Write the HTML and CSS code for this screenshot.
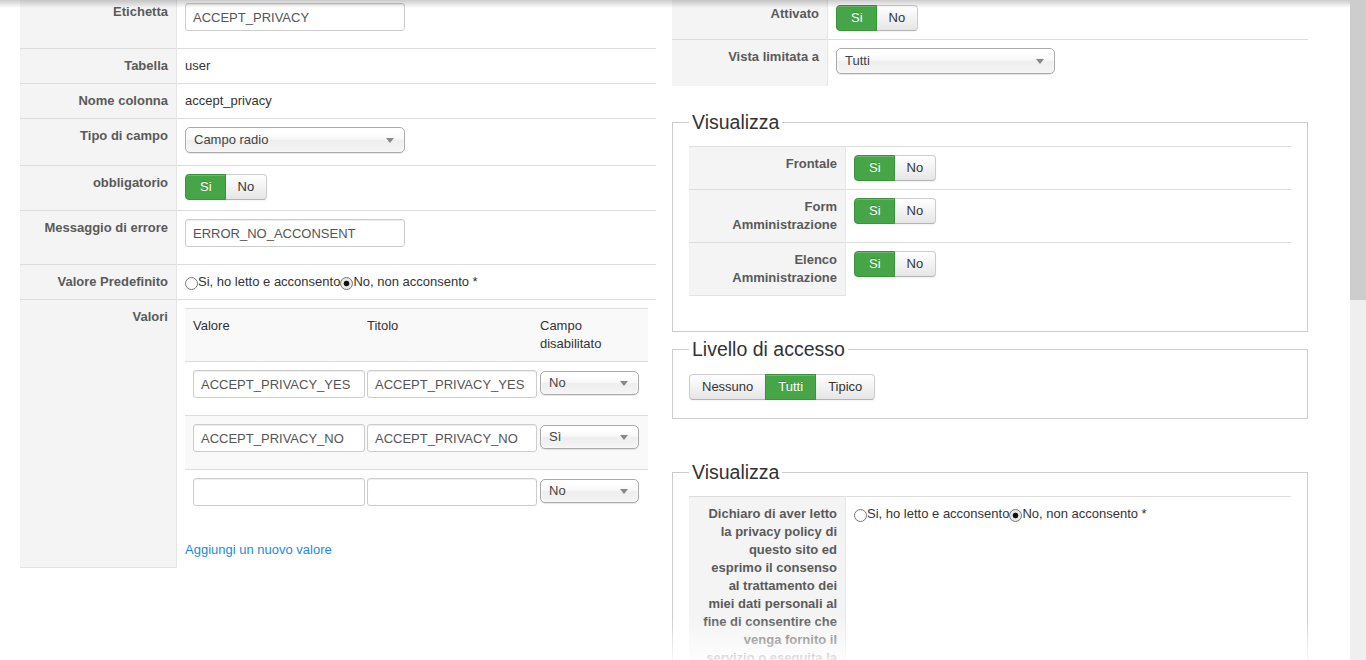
FILE: index.html
```html
<!DOCTYPE html>
<html>
<head>
    <meta charset="UTF-8">
    <title>Campo utente - accept_privacy</title>
    <link rel="stylesheet" href="styles.css">
</head>
<body>
<div class="screen">
    <div class="viewport">
        <div class="page">
            <!-- colonna sinistra: dettagli del campo -->
            <div class="col col-left">
                <table class="form">
                    <tr>
                        <td class="key">Etichetta</td>
                        <td><input type="text" class="text" value="ACCEPT_PRIVACY"></td>
                    </tr>
                    <tr>
                        <td class="key">Tabella</td>
                        <td>user</td>
                    </tr>
                    <tr>
                        <td class="key">Nome colonna</td>
                        <td>accept_privacy</td>
                    </tr>
                    <tr>
                        <td class="key">Tipo di campo</td>
                        <td>
                            <div class="select"><span>Campo radio</span><svg width="8" height="5" viewBox="0 0 8 5"><path d="M0 0H8L4 5Z" fill="#888"/></svg></div>
                        </td>
                    </tr>
                    <tr>
                        <td class="key">obbligatorio</td>
                        <td>
                            <div class="btn-group"><span class="btn on">Si</span><span class="btn">No</span></div>
                        </td>
                    </tr>
                    <tr>
                        <td class="key">Messaggio di errore</td>
                        <td><input type="text" class="text" value="ERROR_NO_ACCONSENT"></td>
                    </tr>
                    <tr>
                        <td class="key">Valore Predefinito</td>
                        <td>
                            <span class="radio"></span>Si, ho letto e acconsento<span class="radio checked"></span>No, non acconsento *
                        </td>
                    </tr>
                    <tr class="last">
                        <td class="key">Valori</td>
                        <td>
                            <table class="values">
                                <tr class="stripe">
                                    <td class="c1">Valore</td>
                                    <td class="c2">Titolo</td>
                                    <td class="c3">Campo disabilitato</td>
                                </tr>
                                <tr>
                                    <td class="c1"><input type="text" class="text w1" value="ACCEPT_PRIVACY_YES"></td>
                                    <td class="c2"><input type="text" class="text w2" value="ACCEPT_PRIVACY_YES"></td>
                                    <td class="c3"><div class="select small"><span>No</span><svg width="8" height="5" viewBox="0 0 8 5"><path d="M0 0H8L4 5Z" fill="#888"/></svg></div></td>
                                </tr>
                                <tr class="stripe">
                                    <td class="c1"><input type="text" class="text w1" value="ACCEPT_PRIVACY_NO"></td>
                                    <td class="c2"><input type="text" class="text w2" value="ACCEPT_PRIVACY_NO"></td>
                                    <td class="c3"><div class="select small"><span>Sì</span><svg width="8" height="5" viewBox="0 0 8 5"><path d="M0 0H8L4 5Z" fill="#888"/></svg></div></td>
                                </tr>
                                <tr>
                                    <td class="c1"><input type="text" class="text w1" value=""></td>
                                    <td class="c2"><input type="text" class="text w2" value=""></td>
                                    <td class="c3"><div class="select small"><span>No</span><svg width="8" height="5" viewBox="0 0 8 5"><path d="M0 0H8L4 5Z" fill="#888"/></svg></div></td>
                                </tr>
                            </table>
                            <a href="#" class="add-link">Aggiungi un nuovo valore</a>
                        </td>
                    </tr>
                </table>
            </div>

            <!-- colonna destra: pubblicazione e visualizzazione -->
            <div class="col col-right">
                <table class="form">
                    <tr>
                        <td class="key">Attivato</td>
                        <td>
                            <div class="btn-group flat"><span class="btn on">Si</span><span class="btn">No</span></div>
                        </td>
                    </tr>
                    <tr>
                        <td class="key">Vista limitata a</td>
                        <td>
                            <div class="select"><span>Tutti</span><svg width="8" height="5" viewBox="0 0 8 5"><path d="M0 0H8L4 5Z" fill="#888"/></svg></div>
                        </td>
                    </tr>
                </table>

                <fieldset class="box first">
                    <legend>Visualizza</legend>
                    <table class="form inner">
                        <tr>
                            <td class="key">Frontale</td>
                            <td><div class="btn-group flat"><span class="btn on">Si</span><span class="btn">No</span></div></td>
                        </tr>
                        <tr>
                            <td class="key">Form Amministrazione</td>
                            <td><div class="btn-group flat"><span class="btn on">Si</span><span class="btn">No</span></div></td>
                        </tr>
                        <tr class="last">
                            <td class="key">Elenco Amministrazione</td>
                            <td><div class="btn-group flat"><span class="btn on">Si</span><span class="btn">No</span></div></td>
                        </tr>
                    </table>
                </fieldset>

                <fieldset class="box access">
                    <legend>Livello di accesso</legend>
                    <div class="btn-group flat"><span class="btn">Nessuno</span><span class="btn on">Tutti</span><span class="btn">Tipico</span></div>
                </fieldset>

                <fieldset class="box preview">
                    <legend>Visualizza</legend>
                    <table class="form inner">
                        <tr>
                            <td class="key">Dichiaro di aver letto la privacy policy di questo sito ed esprimo il consenso al trattamento dei miei dati personali al fine di consentire che venga fornito il servizio o eseguita la prestazione richiesta</td>
                            <td>
                                <span class="radio"></span>Si, ho letto e acconsento<span class="radio checked"></span>No, non acconsento *
                            </td>
                        </tr>
                    </table>
                </fieldset>
            </div>
        </div>
        <div class="top-shade"></div>
        <div class="bottom-fade"></div>
    </div>
    <div class="scrollbar"><div class="thumb"></div></div>
</div>
</body>
</html>
```

FILE: styles.css
```css
html,
body {
    margin: 0;
    padding: 0;
    background: #fff;
}

body {
    font-family: 'Liberation Sans', Arial, sans-serif;
    font-size: 13px;
    line-height: 18px;
    color: #333;
}

.screen {
    display: flex;
    width: 1366px;
    height: 660px;
    overflow: hidden;
}

.viewport {
    position: relative;
    width: 1350px;
    height: 660px;
    overflow: hidden;
}

.scrollbar {
    width: 16px;
    height: 660px;
    background: #efefef;
}

.scrollbar .thumb {
    height: 300px;
    background: #cdcdcd;
}

.page {
    display: flex;
    gap: 16px;
    padding-left: 20px;
    align-items: flex-start;
}

.col {
    width: 636px;
}

.col-left {
    margin-top: -6px;
}

.col-right {
    margin-top: -4px;
}

/* tabelle modulo */
.form {
    width: 100%;
    border-collapse: collapse;
}

.form > tbody > tr > td {
    padding: 8px;
    border-top: 1px solid #ddd;
    vertical-align: top;
    text-align: left;
}

.form > tbody > tr > td.key {
    width: 140px;
    background: #f4f4f4;
    border-right: 1px solid #e6e6e6;
    text-align: right;
    font-weight: bold;
    color: #5a5a5a;
}

.col-right > .form > tbody > tr > td.key {
    width: 139px;
}

.form > tbody > tr.last > td.key {
    border-bottom: 1px solid #e2e2e2;
}

.inner > tbody > tr > td.key {
    padding-left: 11px;
    width: 137px;
}

/* campi */
.text {
    display: block;
    box-sizing: border-box;
    width: 220px;
    height: 28px;
    margin: 0 0 9px;
    padding: 4px 7px;
    font-family: inherit;
    font-size: 13px;
    line-height: 18px;
    color: #555;
    border: 1px solid #ccc;
    border-radius: 3px;
    box-shadow: inset 0 1px 1px rgba(0, 0, 0, 0.075);
    background: #fff;
}

.text.w1 {
    width: 172px;
}

.text.w2 {
    width: 170px;
}

.select {
    box-sizing: border-box;
    width: 220px;
    height: 26px;
    margin-bottom: 4px;
    padding: 0 8px;
    display: flex;
    align-items: center;
    justify-content: space-between;
    border: 1px solid #aaa;
    border-radius: 5px;
    color: #444;
    background: linear-gradient(#fff 20%, #f6f6f6 50%, #eee 52%, #f4f4f4 100%);
    box-shadow: inset 0 0 3px #fff, 0 1px 1px rgba(0, 0, 0, 0.1);
}

.select svg {
    margin-right: 2px;
}

.col-right .select {
    width: 219px;
}

.select.small {
    width: 99px;
    height: 24px;
    margin-top: 1px;
}

/* pulsanti */
.btn-group {
    display: inline-flex;
    margin-bottom: 2px;
}

.btn-group.flat {
    margin-bottom: 0;
}

.btn {
    display: inline-block;
    padding: 4px 12px;
    line-height: 16px;
    font-size: 13px;
    color: #333;
    border: 1px solid #ccc;
    border-bottom-color: #b3b3b3;
    background: linear-gradient(#fff, #e6e6e6);
    box-shadow: inset 0 1px 0 rgba(255, 255, 255, 0.2), 0 1px 2px rgba(0, 0, 0, 0.05);
}

.btn + .btn {
    margin-left: -1px;
}

.btn:first-child {
    border-radius: 4px 0 0 4px;
}

.btn:last-child {
    border-radius: 0 4px 4px 0;
}

.btn.on {
    position: relative;
    color: #fff;
    background: #46a546;
    border-color: #3d913d;
    text-shadow: 0 -1px 0 rgba(0, 0, 0, 0.2);
}

.btn.on:first-child {
    padding: 4px 13px 4px 14px;
}

/* radio */
.radio {
    display: inline-block;
    box-sizing: border-box;
    width: 13px;
    height: 13px;
    vertical-align: -4px;
    border: 1px solid #777;
    border-radius: 50%;
    background: #fff;
}

.radio.checked {
    background: radial-gradient(circle, #111 0, #111 2.5px, #e8e8e8 3.2px, #e8e8e8 100%);
}

/* tabella valori */
.values {
    width: 463px;
    margin-bottom: 18px;
    border-collapse: collapse;
}

.values td {
    border-top: 1px solid #ddd;
    padding: 8px 0;
    vertical-align: top;
}

.values tr.stripe td {
    background: #f9f9f9;
}

.values td.c1 {
    padding-left: 8px;
    width: 172px;
}

.values td.c2 {
    padding-left: 2px;
    width: 170px;
}

.values td.c3 {
    padding-left: 3px;
    padding-right: 8px;
}

.add-link {
    color: #1e8bd6;
    text-decoration: none;
}

/* fieldset */
.box {
    margin: 0;
    padding: 12px 16px 35px;
    border: 1px solid #ccc;
    min-width: 0;
}

.box legend {
    padding: 0 3px;
    font-size: 19.5px;
    line-height: 24px;
    color: #333;
}

.box.first {
    margin-top: 24px;
}

.box.access {
    margin-top: 5px;
    padding: 13px 16px 18px;
}

.box.preview {
    margin-top: 41px;
    padding-bottom: 40px;
}

.inner {
    width: 602px;
}

/* sovrapposizioni */
.top-shade {
    position: absolute;
    top: 0;
    left: 0;
    right: 0;
    height: 8px;
    background: linear-gradient(rgba(0, 0, 0, 0.2), rgba(0, 0, 0, 0));
}

.bottom-fade {
    position: absolute;
    left: 0;
    right: 0;
    bottom: 0;
    height: 44px;
    background: linear-gradient(rgba(255, 255, 255, 0), rgba(255, 255, 255, 0.85));
}
```
